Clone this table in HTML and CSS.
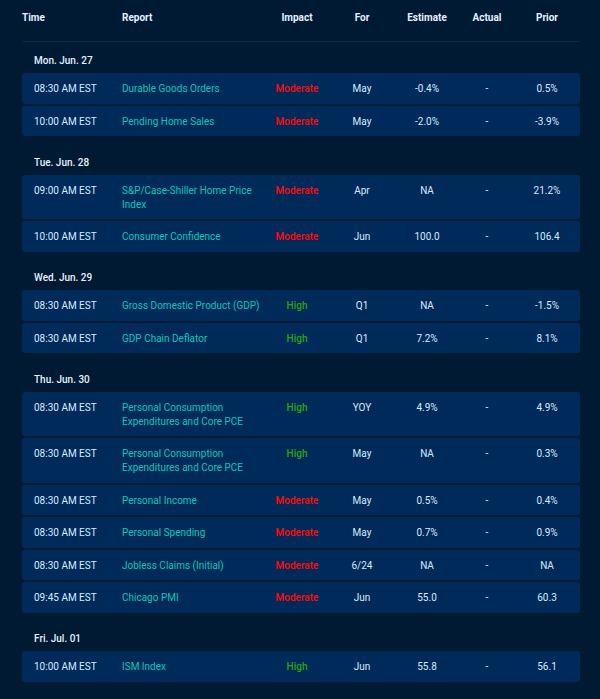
FILE: index.html
```html
<!DOCTYPE html>
<html>
<head>
<meta charset="utf-8">
<link rel="stylesheet" href="styles.css">
</head>
<body>
<div class="cal">
  <div class="head grid">
    <div class="c-time">Time</div>
    <div class="c-report">Report</div>
    <div class="c">Impact</div>
    <div class="c">For</div>
    <div class="c">Estimate</div>
    <div class="c">Actual</div>
    <div class="c">Prior</div>
  </div>

  <div class="group">
    <div class="date">Mon. Jun. 27</div>
    <div class="row grid"><div class="c-time">08:30 AM EST</div><div class="c-report">Durable Goods Orders</div><div class="c mod">Moderate</div><div class="c">May</div><div class="c">-0.4%</div><div class="c">-</div><div class="c">0.5%</div></div>
    <div class="row grid"><div class="c-time">10:00 AM EST</div><div class="c-report">Pending Home Sales</div><div class="c mod">Moderate</div><div class="c">May</div><div class="c">-2.0%</div><div class="c">-</div><div class="c">-3.9%</div></div>
  </div>

  <div class="group">
    <div class="date">Tue. Jun. 28</div>
    <div class="row grid"><div class="c-time">09:00 AM EST</div><div class="c-report">S&amp;P/Case-Shiller Home Price Index</div><div class="c mod">Moderate</div><div class="c">Apr</div><div class="c">NA</div><div class="c">-</div><div class="c">21.2%</div></div>
    <div class="row grid"><div class="c-time">10:00 AM EST</div><div class="c-report">Consumer Confidence</div><div class="c mod">Moderate</div><div class="c">Jun</div><div class="c">100.0</div><div class="c">-</div><div class="c">106.4</div></div>
  </div>

  <div class="group">
    <div class="date">Wed. Jun. 29</div>
    <div class="row grid"><div class="c-time">08:30 AM EST</div><div class="c-report">Gross Domestic Product (GDP)</div><div class="c high">High</div><div class="c">Q1</div><div class="c">NA</div><div class="c">-</div><div class="c">-1.5%</div></div>
    <div class="row grid"><div class="c-time">08:30 AM EST</div><div class="c-report">GDP Chain Deflator</div><div class="c high">High</div><div class="c">Q1</div><div class="c">7.2%</div><div class="c">-</div><div class="c">8.1%</div></div>
  </div>

  <div class="group">
    <div class="date">Thu. Jun. 30</div>
    <div class="row grid"><div class="c-time">08:30 AM EST</div><div class="c-report">Personal Consumption Expenditures and Core PCE</div><div class="c high">High</div><div class="c">YOY</div><div class="c">4.9%</div><div class="c">-</div><div class="c">4.9%</div></div>
    <div class="row grid"><div class="c-time">08:30 AM EST</div><div class="c-report">Personal Consumption Expenditures and Core PCE</div><div class="c high">High</div><div class="c">May</div><div class="c">NA</div><div class="c">-</div><div class="c">0.3%</div></div>
    <div class="row grid"><div class="c-time">08:30 AM EST</div><div class="c-report">Personal Income</div><div class="c mod">Moderate</div><div class="c">May</div><div class="c">0.5%</div><div class="c">-</div><div class="c">0.4%</div></div>
    <div class="row grid"><div class="c-time">08:30 AM EST</div><div class="c-report">Personal Spending</div><div class="c mod">Moderate</div><div class="c">May</div><div class="c">0.7%</div><div class="c">-</div><div class="c">0.9%</div></div>
    <div class="row grid"><div class="c-time">08:30 AM EST</div><div class="c-report">Jobless Claims (Initial)</div><div class="c mod">Moderate</div><div class="c">6/24</div><div class="c">NA</div><div class="c">-</div><div class="c">NA</div></div>
    <div class="row grid"><div class="c-time">09:45 AM EST</div><div class="c-report">Chicago PMI</div><div class="c mod">Moderate</div><div class="c">Jun</div><div class="c">55.0</div><div class="c">-</div><div class="c">60.3</div></div>
  </div>

  <div class="group">
    <div class="date">Fri. Jul. 01</div>
    <div class="row grid"><div class="c-time">10:00 AM EST</div><div class="c-report">ISM Index</div><div class="c high">High</div><div class="c">Jun</div><div class="c">55.8</div><div class="c">-</div><div class="c">56.1</div></div>
  </div>
</div>
</body>
</html>
```

FILE: styles.css
```css
html, body {
  margin: 0;
  padding: 0;
  background: #011a34;
}
body {
  font-family: Roboto, "Liberation Sans", sans-serif;
  font-size: 10px;
  line-height: 14px;
  color: #d6ebff;
}
.cal {
  width: 558px;
  padding: 11px 0 0 22px;
}
.grid {
  display: grid;
  grid-template-columns: 100px 145px 60px 70px 60px 60px 60px 3px;
  align-items: start;
}
.c { text-align: center; }
.head {
  font-weight: 700;
  color: #e4f1ff;
  padding-bottom: 16px;
  border-bottom: 1px solid #0b2744;
}
.group { margin-top: 19.5px; }
.head + .group { margin-top: 12px; }
.date {
  font-weight: 500;
  padding-left: 12px;
  margin-bottom: 5px;
  color: #e4f1ff;
}
.row {
  background: #002a5a;
  border-radius: 3px;
  padding: 9px 0 7.5px 0;
  margin-bottom: 2px;
}
.row .c-time { padding-left: 12px; }
.row .c-report { color: #12c6b6; }
.mod { color: #ff0a0a; font-weight: 500; }
.high { color: #2fa30f; font-weight: 500; }
```
